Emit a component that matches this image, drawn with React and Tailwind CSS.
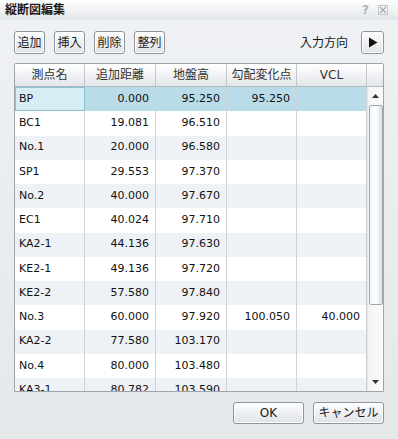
import React from "react";

const font = "font-['DejaVu_Sans','Noto_Sans_CJK_JP',sans-serif]";

const rows = [
  ["BP", "0.000", "95.250", "95.250", ""],
  ["BC1", "19.081", "96.510", "", ""],
  ["No.1", "20.000", "96.580", "", ""],
  ["SP1", "29.553", "97.370", "", ""],
  ["No.2", "40.000", "97.670", "", ""],
  ["EC1", "40.024", "97.710", "", ""],
  ["KA2-1", "44.136", "97.630", "", ""],
  ["KE2-1", "49.136", "97.720", "", ""],
  ["KE2-2", "57.580", "97.840", "", ""],
  ["No.3", "60.000", "97.920", "100.050", "40.000"],
  ["KA2-2", "77.580", "103.170", "", ""],
  ["No.4", "80.000", "103.480", "", ""],
  ["KA3-1", "80.782", "103.590", "", ""],
];

const widths = ["w-[70px]", "w-[71px]", "w-[71px]", "w-[70px]", "w-[70px]"];
const headers = ["測点名", "追加距離", "地盤高", "勾配変化点", "VCL"];

function Btn({ children, className = "" }) {
  return (
    <button
      className={`flex items-center justify-center rounded-[3px] border border-[#8d959c] bg-gradient-to-b from-[#fdfdfe] to-[#dfe3e7] text-[12px] text-[#1a1a1a] shadow-[inset_0_0_0_1px_#ffffff] ${className}`}
    >
      {children}
    </button>
  );
}

export default function App() {
  return (
    <div className={`w-[398px] h-[439px] flex flex-col bg-gradient-to-b from-[#eff1f4] to-[#e5e8eb] ${font}`}>
      {/* title bar */}
      <div className="h-[20px] flex items-center justify-between pl-[5px] pr-[10px] bg-gradient-to-b from-[#ffffff] to-[#e2e5e9]">
        <span className="text-[12px] font-bold text-[#1a1a1a] leading-none">縦断図編集</span>
        <div className="flex items-center gap-[9px] text-[#b0b4b8]">
          <span className="text-[12px] font-bold leading-none">?</span>
          <svg width="10" height="10" viewBox="0 0 10 10">
            <rect x="0.5" y="0.5" width="9" height="9" fill="none" stroke="#c4c7ca" />
            <path d="M2 2 L8 8 M8 2 L2 8" stroke="#a8acb0" strokeWidth="1.3" />
          </svg>
        </div>
      </div>

      <div className="flex flex-col px-[14px]">
        {/* toolbar */}
        <div className="mt-[11px] flex items-center h-[23px]">
          <div className="flex gap-[9px]">
            <Btn className="w-[31px] h-[23px]">追加</Btn>
            <Btn className="w-[31px] h-[23px]">挿入</Btn>
            <Btn className="w-[31px] h-[23px]">削除</Btn>
            <Btn className="w-[31px] h-[23px]">整列</Btn>
          </div>
          <span className="ml-auto mr-[13px] text-[12px] text-[#1a1a1a]">入力方向</span>
          <Btn className="w-[23px] h-[23px]">
            <svg width="10" height="11" viewBox="0 0 10 11">
              <path d="M1 0.5 L9.5 5.5 L1 10.5 Z" fill="#111" />
            </svg>
          </Btn>
        </div>

        {/* table */}
        <div className="mt-[9px] h-[329px] flex flex-col border border-[#9ea4aa] rounded-t-[2px] bg-white overflow-hidden">
          <div className="flex h-[23px] shrink-0 border-b border-[#b5babf] bg-gradient-to-b from-[#ffffff] to-[#e3e6ea]">
            {headers.map((h, i) => (
              <div
                key={h}
                className={`${widths[i]} shrink-0 border-r border-[#c3c7cc] flex items-center justify-center text-[12px] text-[#333]`}
              >
                {h}
              </div>
            ))}
            <div className="flex-1" />
          </div>

          <div className="flex flex-1 min-h-0">
            <div className="flex-1 overflow-hidden">
              {rows.map((r, ri) => {
                const sel = ri === 0;
                const bg = sel ? "bg-[#b9dce8]" : ri % 2 === 1 ? "bg-white" : "bg-[#eef1f6]";
                return (
                  <div key={r[0]} className={`flex h-[24.25px] ${bg}`}>
                    {r.map((c, ci) => (
                      <div
                        key={ci}
                        className={`${widths[ci]} shrink-0 border-r border-[#cfd3d7] flex items-center text-[11px] text-[#111] ${
                          ci === 0 ? "justify-start pl-[4px]" : "justify-end pr-[6px]"
                        } ${sel && ci === 0 ? "bg-[#d8ecf3] outline outline-1 -outline-offset-1 outline-[#86c3d3]" : ""}`}
                      >
                        {c}
                      </div>
                    ))}
                  </div>
                );
              })}
            </div>

            {/* scrollbar */}
            <div className="w-[16px] shrink-0 flex flex-col items-center bg-gradient-to-r from-[#f3f4f6] to-[#fbfbfc] border-l border-[#e2e4e7]">
              <div className="h-[18px] flex items-center justify-center">
                <svg width="7" height="4" viewBox="0 0 7 4">
                  <path d="M0 4 L3.5 0 L7 4 Z" fill="#333" />
                </svg>
              </div>
              <div className="w-[14px] h-[200px] rounded-[2px] border border-[#a2a8ae] bg-gradient-to-r from-[#f4f5f7] via-[#ffffff] to-[#d9dde1]" />
              <div className="flex-1" />
              <div className="h-[18px] flex items-center justify-center">
                <svg width="7" height="4" viewBox="0 0 7 4">
                  <path d="M0 0 L3.5 4 L7 0 Z" fill="#333" />
                </svg>
              </div>
            </div>
          </div>
        </div>

        {/* footer buttons */}
        <div className="mt-[10px] flex justify-end gap-[9px]">
          <Btn className="w-[71px] h-[22px]">OK</Btn>
          <Btn className="w-[71px] h-[22px]">キャンセル</Btn>
        </div>
      </div>
    </div>
  );
}
